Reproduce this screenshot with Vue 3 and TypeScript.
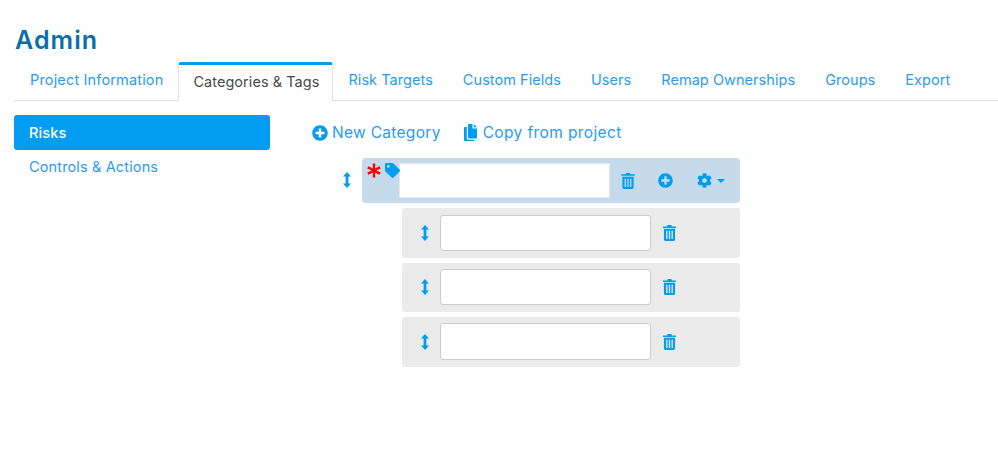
<script setup lang="ts">
const tabs: string[] = ['Project Information', 'Categories & Tags', 'Risk Targets', 'Custom Fields', 'Users', 'Remap Ownerships', 'Groups', 'Export']
const active = 'Categories & Tags'
const children: number[] = [1, 2, 3]
const plus = 'M256 8C119 8 8 119 8 256s111 248 248 248 248-111 248-248S393 8 256 8zm144 276c0 6.6-5.4 12-12 12h-92v92c0 6.6-5.4 12-12 12h-56c-6.6 0-12-5.4-12-12v-92h-92c-6.6 0-12-5.4-12-12v-56c0-6.6 5.4-12 12-12h92v-92c0-6.6 5.4-12 12-12h56c6.6 0 12 5.4 12 12v92h92c6.6 0 12 5.4 12 12v56z'
const cog = 'M487.4 315.7l-42.6-24.6c4.3-23.2 4.3-47 0-70.2l42.6-24.6c4.9-2.8 7.1-8.6 5.5-14-11.1-35.6-30-67.8-54.7-94.6-3.8-4.1-10-5.1-14.8-2.3L380.8 110c-17.9-15.4-38.5-27.3-60.8-35.1V25.8c0-5.6-3.9-10.5-9.4-11.7-36.7-8.2-74.3-7.8-109.2 0-5.5 1.2-9.4 6.1-9.4 11.7V75c-22.2 7.9-42.8 19.8-60.8 35.1L88.7 85.5c-4.9-2.8-11-1.9-14.8 2.3-24.7 26.7-43.6 58.9-54.7 94.6-1.7 5.4.6 11.2 5.5 14L67.3 221c-4.3 23.2-4.3 47 0 70.2l-42.6 24.6c-4.9 2.8-7.1 8.6-5.5 14 11.1 35.6 30 67.8 54.7 94.6 3.8 4.1 10 5.1 14.8 2.3l42.6-24.6c17.9 15.4 38.5 27.3 60.8 35.1v49.2c0 5.6 3.9 10.5 9.4 11.7 36.7 8.2 74.3 7.8 109.2 0 5.5-1.2 9.4-6.1 9.4-11.7v-49.2c22.2-7.9 42.8-19.8 60.8-35.1l42.6 24.6c4.9 2.8 11 1.9 14.8-2.3 24.7-26.7 43.6-58.9 54.7-94.6 1.5-5.5-.7-11.3-5.6-14.1zM256 336c-44.1 0-80-35.9-80-80s35.9-80 80-80 80 35.9 80 80-35.9 80-80 80z'
const tag = 'M0 252.118V48C0 21.49 21.49 0 48 0h204.118a48 48 0 0 1 33.941 14.059l211.882 211.882c18.745 18.745 18.745 49.137 0 67.882L293.823 497.941c-18.745 18.745-49.137 18.745-67.882 0L14.059 286.059A48 48 0 0 1 0 252.118zM112 64c-26.51 0-48 21.49-48 48s21.49 48 48 48 48-21.49 48-48-21.49-48-48-48z'
const trash = 'M5 0h4l.6 1.4H14V3H0V1.4h4.4zM1 4h12v11.500a1.500 1.500 0 0 1-1.500 1.500h-9A1.500 1.500 0 0 1 1 15.500zM3.400 6v9h1.400V6zm2.900 0v9h1.400V6zm2.900 0v9h1.400V6z'
const updown = 'M4 0l4 4.400H5.400v7.200H8L4 16 0 11.600h2.600V4.400H0z'
const files = 'M8.500 0v4.500H13V13.500a1 1 0 0 1-1 1H5a1 1 0 0 1-1-1V1a1 1 0 0 1 1-1zM9.800 0 13 3.200H9.800zM2.800 3v11.200a1.600 1.600 0 0 0 1.600 1.600h6.100V16a1 1 0 0 1-1 1H1a1 1 0 0 1-1-1V4a1 1 0 0 1 1-1z'
</script>

<template>
  <div class="page">
    <h1 class="title">Admin</h1>
    <nav class="tabs">
      <a v-for="t in tabs" :key="t" class="tab" :class="{ on: t === active }">{{ t }}</a>
    </nav>
    <div class="body">
      <aside class="side">
        <a class="side-item sel">Risks</a>
        <a class="side-item">Controls &amp; Actions</a>
      </aside>
      <main class="main">
        <div class="actions">
          <a class="action">
            <svg class="ic-plus" viewBox="0 0 512 512"><path :d="plus" /></svg>
            New Category
          </a>
          <a class="action copy">
            <svg class="ic-files" viewBox="0 0 13 17"><path :d="files" /></svg>
            Copy from project
          </a>
        </div>
        <div class="cat">
          <div class="cat-handle">
            <svg class="ic-updown" viewBox="0 0 8 16"><path :d="updown" /></svg>
          </div>
          <div class="cat-row">
            <span class="star">
              <svg viewBox="0 0 14 14"><path d="M5.700 0h2.600l-.3 5 4.500-2.300 1.300 2.300L9.300 7l4.500 2-1.300 2.300L8 9l.3 5H5.700L6 9l-4.500 2.300L.2 9l4.500-2-4.500-2 1.300-2.300L6 5z" /></svg>
            </span>
            <svg class="ic-tag" viewBox="0 0 512 512"><path :d="tag" /></svg>
            <input class="field cat-field" type="text" />
            <svg class="ic-trash cat-trash" viewBox="0 0 14 17"><path :d="trash" /></svg>
            <svg class="ic-plus cat-plus" viewBox="0 0 512 512"><path :d="plus" /></svg>
            <svg class="ic-cog" viewBox="0 0 512 512"><path :d="cog" /></svg>
            <span class="caret"></span>
          </div>
        </div>
        <div v-for="c in children" :key="c" class="child" :class="'child-' + c">
          <svg class="ic-updown child-handle" viewBox="0 0 8 16"><path :d="updown" /></svg>
          <input class="field" type="text" />
          <svg class="ic-trash child-trash" viewBox="0 0 14 17"><path :d="trash" /></svg>
        </div>
      </main>
    </div>
  </div>
</template>

<style>
html, body { margin: 0; background: #fff; }
</style>

<style scoped>
.page {
  width: 998px;
  height: 453px;
  box-sizing: border-box;
  padding: 26px 0 0 14px;
  font-family: Inter, "Noto Sans", sans-serif;
  overflow: hidden;
}
.title {
  margin: 0 0 6px 1px;
  height: 30px;
  line-height: 28px;
  font-size: 25px;
  font-weight: 600;
  letter-spacing: 1.1px;
  color: #0a6ea8;
}
.tabs {
  display: flex;
  height: 39px;
  box-sizing: border-box;
  border-bottom: 1px solid #dde1e8;
}
.tab {
  padding: 0 15px;
  height: 36px;
  line-height: 36px;
  font-size: 14.5px;
  letter-spacing: 0.05px;
  color: #2b9bf0;
}
.tab:first-child { padding-left: 16px; letter-spacing: 0.16px; }
.tab.on {
  height: 39px;
  padding: 0 13px 0 14px;
  line-height: 34px;
  box-sizing: border-box;
  border: 1px solid #dde1e8;
  border-top: 3px solid #009df2;
  border-bottom: none;
  border-radius: 3px 3px 0 0;
  background: #fff;
  color: #4a4a4a;
  letter-spacing: 0.05px;
}
.body {
  display: flex;
  padding-top: 14px;
}
.side {
  width: 256px;
  flex: none;
}
.side-item {
  display: block;
  height: 35px;
  line-height: 33px;
  padding-left: 15px;
  font-size: 14.5px;
  letter-spacing: 0.14px;
  color: #2b9bf0;
  border-radius: 3px;
}
.side-item.sel {
  line-height: 35px;
  background: #009df2;
  color: #fff;
  font-weight: 500;
}
.main {
  margin-left: 42px;
  flex: 1;
}
.actions {
  display: flex;
  height: 35px;
  align-items: center;
  margin-bottom: 8px;
}
.action {
  display: flex;
  align-items: center;
  font-size: 15.500px;
  letter-spacing: 0.3px;
  color: #2b9bf0;
}
.copy { margin-left: 23px; letter-spacing: 0.38px; }
.ic-plus, .ic-files, .ic-tag, .ic-updown, .ic-trash, .ic-cog { fill: #009df2; flex: none; }
.action .ic-plus { width: 16px; height: 16px; margin-right: 4px; }
.ic-files { width: 13px; height: 17px; margin-right: 6px; }
.cat { display: flex; }
.cat-handle {
  width: 50px;
  display: flex;
  align-items: center;
  justify-content: flex-end;
  padding: 0 11px 1px 0;
  box-sizing: border-box;
}
.ic-updown { width: 8px; height: 16px; }
.cat-row {
  position: relative;
  width: 378px;
  height: 45px;
  box-sizing: border-box;
  background: #c5dbeb;
  border-radius: 4px;
  display: flex;
  align-items: center;
}
.star {
  position: absolute;
  left: 5px;
  top: 5px;
  width: 14px;
  height: 15px;
  fill: #f00;
}
.star svg { display: block; width: 14px; height: 15px; }
.ic-tag {
  position: absolute;
  left: 23px;
  top: 5px;
  width: 15px;
  height: 15px;
}
.field {
  width: 211px;
  height: 36px;
  box-sizing: border-box;
  border: 1px solid #ccc;
  border-radius: 3px;
  background: #fff;
  padding: 0;
  outline: none;
}
.cat-field {
  margin: 0 0 0 37px;
  height: 35px;
  border-radius: 0;
  border-color: #e4e8ec;
}
.ic-trash { width: 13px; height: 16px; }
.cat-trash { width: 14px; height: 16px; margin-left: 11px; }
.cat-plus { width: 15px; height: 15px; margin-left: 23px; }
.ic-cog { width: 15px; height: 15px; margin-left: 24px; }
.caret {
  width: 0;
  height: 0;
  margin-left: 5px;
  border-left: 4px solid transparent;
  border-right: 4px solid transparent;
  border-top: 4px solid #009df2;
}
.child {
  margin: 5px 0 0 90px;
  width: 338px;
  height: 50px;
  box-sizing: border-box;
  background: #ebebeb;
  border-radius: 3px;
  display: flex;
  align-items: center;
  padding-left: 19px;
}
.child-2 { height: 49px; padding-bottom: 1px; }
.child-3 { padding-bottom: 1px; }
.child-3 .field { height: 37px; }
.child-trash { margin-left: 12px; }
.child .field { margin-left: 11px; }
</style>
